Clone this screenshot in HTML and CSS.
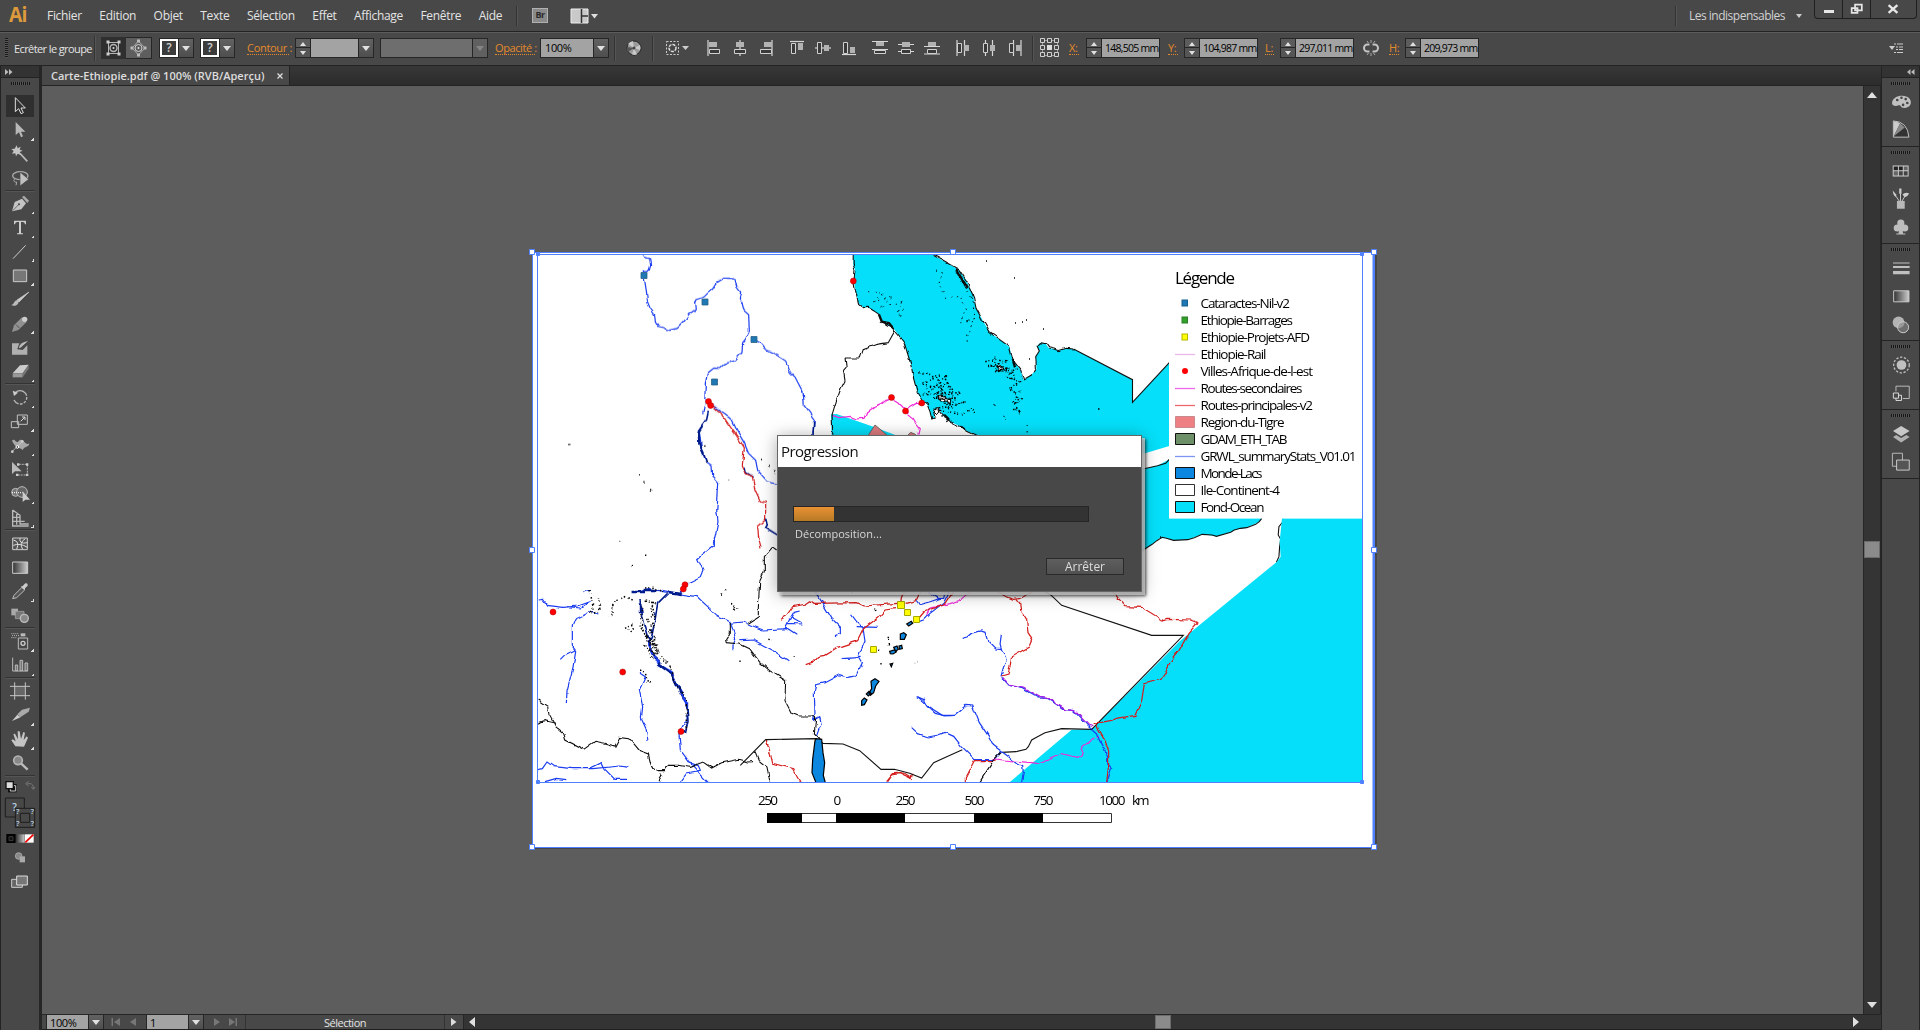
FILE: index.html
```html
<!DOCTYPE html>
<html lang="fr">
<head>
<meta charset="utf-8">
<title>Carte-Ethiopie.pdf @ 100% (RVB/Aperçu)</title>
<link rel="stylesheet" href="styles.css">
</head>
<body>
<svg class="defs" width="0" height="0" aria-hidden="true">
  <defs>
    <linearGradient id="lg" x1="0" y1="0" x2="1" y2="0"><stop offset="0" stop-color="#333"/><stop offset="1" stop-color="#ccc"/></linearGradient>
    <filter id="rough" filterUnits="userSpaceOnUse" x="530" y="250" width="850" height="540">
      <feTurbulence type="fractalNoise" baseFrequency="0.14" numOctaves="1" seed="4"/>
      <feDisplacementMap in="SourceGraphic" scale="5" xChannelSelector="R" yChannelSelector="G"/>
    </filter>
    <clipPath id="frame"><rect x="538" y="254" width="824" height="528"/></clipPath>
  </defs>
</svg>
<div class="app">
  <header class="menubar">
    <div class="logo">Ai</div>
    <nav class="menus"><span>Fichier</span><span>Edition</span><span>Objet</span><span>Texte</span><span>Sélection</span><span>Effet</span><span>Affichage</span><span>Fenêtre</span><span>Aide</span></nav>
    <i class="vsep"></i>
    <span class="bridge">Br</span>
    <svg class="arrange" width="28" height="18" viewBox="0 0 28 18"><path d="M1 2h17v14H1z" fill="#c9c9c9" stroke="#eee"/><path d="M11.500 2v14M11.500 9H18" stroke="#333" fill="none" stroke-width="1.500"/><path d="M21 7h7l-3.500 4.500z" fill="#ddd"/></svg>
    <div class="spacer"></div>
    <i class="vsep"></i>
    <span class="workspace">Les indispensables</span>
    <svg class="wsarrow" width="6" height="4" viewBox="0 0 6 4"><path d="M0 0h6L3 4z" fill="#ccc"/></svg>
    <div class="winbtns">
      <svg width="27" height="18" viewBox="0 0 27 18"><path d="M9 10h10v3H9z" fill="#e6e6e6"/></svg>
      <svg width="28" height="18" viewBox="0 0 28 18"><path d="M12.500 4.500h7v6h-7z M9 8h6v5H9z" fill="#484848" stroke="#e6e6e6" stroke-width="1.800"/></svg>
      <svg width="46" height="18" viewBox="0 0 46 18"><path d="M18 5l9 8M27 5l-9 8" stroke="#e6e6e6" stroke-width="2.400"/></svg>
    </div>
  </header>

  <div class="control">
    <i class="grip-v"></i>
    <span class="ctx">Ecrêter le groupe</span>
    <i class="vsep"></i>
    <div class="pair">
      <svg class="on" width="25" height="22" viewBox="0 0 25 22"><g fill="none" stroke="#b4b4b4"><path d="M7.500 5.500h10v11h-10z"/><circle cx="12.500" cy="11" r="3.500" stroke-width="1.500"/></g><path d="M5.500 3.500h3v3h-3zM16.500 3.500h3v3h-3zM5.500 15.500h3v3h-3zM16.500 15.500h3v3h-3z" fill="#ccc"/><circle cx="12.500" cy="11" r="1" fill="#ddd"/></svg>
      <svg width="25" height="22" viewBox="0 0 25 22"><path d="M12.500 4L19 11l-6.500 7L6 11z" fill="none" stroke="#aaa"/><circle cx="12.500" cy="11" r="3.500" fill="none" stroke="#ccc"/><path d="M11 2.500h3v3h-3zM11 16.500h3v3h-3zM4.500 9.500h3v3h-3zM17.500 9.500h3v3h-3z" fill="#bbb"/><circle cx="12.500" cy="11" r="1" fill="#ddd"/></svg>
    </div>
    <div class="swatch"><b>?</b><i class="dd"></i></div>
    <div class="swatch"><b>?</b><i class="dd"></i></div>
    <span class="link l-contour">Contour :</span>
    <div class="field w-stroke"><i class="step"></i><span class="inp"></span><i class="dd"></i></div>
    <div class="field disabled"><span class="inp"></span><i class="dd"></i></div>
    <span class="link l-opac">Opacité :</span>
    <div class="field w-opac"><span class="inp">100%</span><i class="dd"></i></div>
    <i class="vsep s1"></i>
    <svg class="globe" width="16" height="16" viewBox="0 0 16 16"><circle cx="8" cy="8" r="7" fill="#9a9a9a" stroke="#222"/><path d="M8 8L2 4a7 7 0 0 1 5-3zM8 8l6-3a7 7 0 0 1 0 5zM8 8l-2 6.500a7 7 0 0 0 5 0z" fill="#c8c8c8"/><path d="M8 8l-6 4a7 7 0 0 1-1-5z" fill="#555"/><circle cx="8" cy="8" r="1.500" fill="#444"/></svg>
    <i class="vsep s2"></i>
    <svg class="iso" width="25" height="16" viewBox="0 0 25 16"><path d="M1.500 1.500h12v13h-12z" fill="none" stroke="#ccc" stroke-dasharray="2 1.500"/><circle cx="7.500" cy="8" r="3.500" fill="none" stroke="#ddd" stroke-width="1.500" stroke-dasharray="3 1"/><path d="M17 6h7l-3.500 4z" fill="#ccc"/></svg>
    <div class="aligns">
      <svg viewBox="0 0 16 16"><path d="M2 0v16" class="ln"/><path d="M3 2h8v5H3z" class="fl"/><path d="M3.500 9.500h10v4h-10z" class="ol"/></svg>
      <svg viewBox="0 0 16 16"><path d="M8 0v16" class="ln"/><path d="M4 2h8v5H4z" class="fl"/><path d="M2.500 9.500h11v4h-11z" class="ol"/></svg>
      <svg viewBox="0 0 16 16"><path d="M14 0v16" class="ln"/><path d="M6 2h8v5H6z" class="fl"/><path d="M2.500 9.500h11v4h-11z" class="ol"/></svg>
      <svg viewBox="0 0 16 16"><path d="M1 1.500h14" class="ln"/><path d="M2.500 3.500h4v10h-4z" class="ol"/><path d="M9 3h5v7H9z" class="fl"/></svg>
      <svg viewBox="0 0 16 16"><path d="M0 8h16" class="ln"/><path d="M2.500 2.500h4v11h-4z" class="ol"/><path d="M9 5h5v6H9z" class="fl"/></svg>
      <svg viewBox="0 0 16 16"><path d="M1 14.500h14" class="ln"/><path d="M2.500 2.500h4v11h-4z" class="ol"/><path d="M9 7h5v6H9z" class="fl"/></svg>
      <svg viewBox="0 0 16 16"><path d="M0 1.500h16M0 9.500h16" class="ln"/><path d="M4 2h8v4H4z" class="fl"/><path d="M2.500 10.500h11v3h-11z" class="ol"/></svg>
      <svg viewBox="0 0 16 16"><path d="M0 4.500h16M0 11.500h16" class="ln"/><path d="M4 2h8v5H4z" class="fl"/><path d="M3.500 9.500h9v4h-9z" class="ol"/></svg>
      <svg viewBox="0 0 16 16"><path d="M0 6.500h16M0 14h16" class="ln"/><path d="M4 2h8v4H4z" class="fl"/><path d="M3.500 9.500h9v4h-9z" class="ol"/></svg>
      <svg viewBox="0 0 16 16"><path d="M2 0v16M9.500 0v16" class="ln"/><path d="M2.500 3.500h4v9h-4z" class="ol"/><path d="M9 5h5v6H9z" class="fl"/></svg>
      <svg viewBox="0 0 16 16"><path d="M4.500 0v16M11.500 0v16" class="ln"/><path d="M2.500 3.500h4v9h-4z" class="ol"/><path d="M9 5h5v6H9z" class="fl"/></svg>
      <svg viewBox="0 0 16 16"><path d="M6.500 0v16M14 0v16" class="ln"/><path d="M2.500 3.500h4v9h-4z" class="ol"/><path d="M9 5h5v6H9z" class="fl"/></svg>
    </div>
    <i class="vsep s3"></i>
    <svg class="refpt" width="20" height="20" viewBox="0 0 20 20"><g fill="none" stroke="#d0d0d0"><path d="M2.500 2.500h15v15h-15z" stroke="#999"/><path fill="#484848" d="M.5.500h4v4h-4zM7.500.500h4v4h-4zM14.500.500h4v4h-4zM.5 7.500h4v4h-4zM14.500 7.500h4v4h-4zM.5 14.500h4v4h-4zM7.500 14.500h4v4h-4zM14.500 14.500h4v4h-4z"/></g><path d="M7 7h5v5H7z" fill="#ddd"/></svg>
    <span class="link c-x">X:</span>
    <div class="field num"><i class="step"></i><span class="inp">148,505 mm</span></div>
    <span class="link c-y">Y:</span>
    <div class="field num"><i class="step"></i><span class="inp">104,987 mm</span></div>
    <span class="link c-l">L:</span>
    <div class="field num"><i class="step"></i><span class="inp">297,011 mm</span></div>
    <svg class="chain" width="16" height="16" viewBox="0 0 16 16"><path d="M6.500 4.500H4.500a3.500 3.500 0 0 0 0 7h2M9.500 4.500h2a3.500 3.500 0 0 1 0 7h-2" fill="none" stroke="#c4c4c4" stroke-width="2"/><path d="M8 0v3M8 13v3M4 1l1.500 2M12 1l-1.500 2M4 15l1.500-2M12 15l-1.500-2" stroke="#aaa"/></svg>
    <span class="link c-h">H:</span>
    <div class="field num"><i class="step"></i><span class="inp">209,973 mm</span></div>
    <div class="spacer"></div>
    <svg class="flyout" width="14" height="10" viewBox="0 0 14 10"><path d="M0 3h6L3 7z" fill="#ccc"/><path d="M5 1h9M7 4h7M7 6.500h7M5 9.500h9" stroke="#ccc" stroke-dasharray="2 1 9"/></svg>
  </div>

  <div class="main">
    <aside class="tools">
      <div class="phead"><svg width="8" height="6" viewBox="0 0 8 6"><path d="M0 0l3.500 3L0 6zM4 0l3.500 3L4 6z" fill="#bbb"/></svg></div>
      <i class="grip-h"></i>
      <div class="toollist">
        <svg class="t sel" viewBox="0 84 120 72"><path d="M46 95v42l10-9 7 15 7-3-7-14h13z" fill="#333" stroke="#ddd" stroke-width="3"/></svg>
        <svg class="t sub" viewBox="0 156 120 72"><path d="M47 168v39l10-8 6 15 6-3-6-14h13z" fill="#b8b8b8"/></svg>
        <svg class="t" viewBox="0 228 120 72"><path d="M60 262l22 24" stroke="#b8b8b8" stroke-width="5"/><path d="M50 238l3 9 9-5-3 9 9 3-9 4 4 9-10-4-5 8-2-9-10 1 5-8-7-6 10-1z" fill="#c4c4c4"/></svg>
        <svg class="t" viewBox="0 300 120 72"><ellipse cx="61" cy="329" rx="23" ry="12" fill="none" stroke="#aaa" stroke-width="4"/><path d="M46 338c-8 4-4 12 4 10l-2 10" fill="none" stroke="#aaa" stroke-width="3"/><path d="M60 318v42l26-20z" fill="#c0c0c0" stroke="#484848" stroke-width="2"/></svg>
        <i class="hs first"></i>
        <svg class="t sub" viewBox="0 375 120 72"><path d="M36 436l8-28 22-10 12 14-14 18z" fill="#c4c4c4"/><path d="M66 393l6-4 15 15-5 7z" fill="#aaa"/><path d="M38 434l18-18" stroke="#444" stroke-width="2"/><circle cx="57" cy="415" r="3" fill="#444"/></svg>
        <svg class="t sub" viewBox="0 447 120 72"><path d="M42 464h36v11h-3q-1-7-7-7h-5v32q0 2 6 2v3H51v-3q6 0 6-2v-32h-5q-6 0-7 7h-3z" fill="#ccc"/></svg>
        <svg class="t sub" viewBox="0 519 120 72"><path d="M39 578l38-40" stroke="#ccc" stroke-width="3"/></svg>
        <svg class="t sub" viewBox="0 591 120 72"><path d="M40 612h40v35H40z" fill="#777" stroke="#ccc" stroke-width="3"/></svg>
        <svg class="t" viewBox="0 663 120 72"><path d="M87 678l-30 30-6-6z" fill="#ccc" stroke="#ccc" stroke-width="2"/><path d="M55 702c4 12-8 22-22 15 10 0 8-16 22-15z" fill="#bbb"/></svg>
        <svg class="t sub" viewBox="0 735 120 72"><path d="M36 798l6-20 24-24 14 14-25 24z" fill="#909090"/><circle cx="74" cy="760" r="8" fill="#ccc"/><path d="M48 776l10 10" stroke="#555" stroke-width="3"/></svg>
        <svg class="t" viewBox="0 807 120 72"><path d="M36 832h22l-6 18 16 2 14-14v28H36z" fill="#b0b0b0"/><path d="M88 823L62 846l-8 2 4-10c8-12 20-12 30-15z" fill="#bbb" stroke="#333" stroke-width="2"/></svg>
        <svg class="t sub" viewBox="0 879 120 72"><path d="M38 922l22-24 26-2-18 26z" fill="#ccc"/><path d="M38 922h30v12H38z" fill="#999"/><path d="M68 922l18-26v12l-18 26z" fill="#777"/></svg>
        <i class="hs"></i>
        <svg class="t sub" viewBox="0 957 120 72"><path d="M46 980a20 20 0 1 1-4 22" fill="none" stroke="#b8b8b8" stroke-width="4" stroke-dasharray="42 4 8 4 8 4 8 4"/><path d="M38 974l4 16 12-10z" fill="#ccc"/></svg>
        <svg class="t sub" viewBox="0 1029 120 72"><path d="M52 1047h30v28H52zM34 1067h22v18H34z" fill="none" stroke="#c0c0c0" stroke-width="3"/><path d="M62 1066l12-12M66 1053h9v9" fill="none" stroke="#ddd" stroke-width="3"/></svg>
        <svg class="t sub" viewBox="0 1101 120 72"><path d="M36 1124c8-10 12 10 20 2 10-16 20 16 32 6-2 14-14 8-20 20-8-10-20-2-32-28z" fill="#a8a8a8"/><path d="M36 1157l32-32" stroke="#ddd" stroke-width="2"/><circle cx="52" cy="1143" r="4" fill="#484848" stroke="#fff" stroke-width="3"/><circle cx="37" cy="1157" r="4" fill="#ccc"/><circle cx="67" cy="1126" r="4" fill="#ccc"/></svg>
        <svg class="t" viewBox="0 1173 120 72"><path d="M36 1188v36l9-8h20z" fill="#bbb"/><path d="M56 1195h26v32H50" fill="none" stroke="#bbb" stroke-width="3" stroke-dasharray="6 3"/><path d="M51 1192h7v7h-7zM78 1192h7v7h-7zM78 1223h7v7h-7zM48 1223h7v7h-7z" fill="#ccc"/></svg>
        <svg class="t sub" viewBox="0 3 120 72"><circle cx="47" cy="37" r="12" fill="#777" stroke="#bbb" stroke-width="3"/><circle cx="66" cy="36" r="16" fill="#666" stroke="#bbb" stroke-width="3"/><path d="M36 38h32" stroke="#fff" stroke-width="3" stroke-dasharray="3 3"/><path d="M68 34v32l8-7h14z" fill="#ccc"/></svg>
        <svg class="t sub" viewBox="0 75 120 72"><path d="M38 90v48h48M38 90l22 16v26h26M50 98v36M38 112h22M38 124h36" fill="none" stroke="#b8b8b8" stroke-width="4"/></svg>
        <i class="hs"></i>
        <svg class="t" viewBox="0 153 120 72"><path d="M38 174h44v35H38z" fill="#555" stroke="#ccc" stroke-width="3"/><path d="M40 180q20 4 10 28M40 196q20-8 42 6M60 174q-4 20 22 14M76 176q-20 12-8 32" fill="none" stroke="#ddd" stroke-width="3"/></svg>
        <svg class="t" viewBox="0 225 120 72"><path d="M38 246h45v34H38z" fill="url(#lg)" stroke="#ccc" stroke-width="3"/></svg>
        <svg class="t sub" viewBox="0 297 120 72"><path d="M38 356l4-10 24-24 8 8-24 23z" fill="#555" stroke="#bbb" stroke-width="3"/><path d="M62 320l6-2 8-8q8-2 7 7l-8 8v6z" fill="#ccc"/></svg>
        <svg class="t" viewBox="0 369 120 72"><path d="M34 386h20v20H34z" fill="#aaa"/><path d="M46 394h26v22H46z" fill="#777" stroke="#aaa" stroke-width="2"/><circle cx="73" cy="415" r="12" fill="#888" stroke="#bbb" stroke-width="4"/></svg>
        <i class="hs"></i>
        <svg class="t sub" viewBox="0 450 120 72"><path d="M55 477h28v33H55z" fill="none" stroke="#bbb" stroke-width="3"/><path d="M62 463h14v9H62z" fill="#bbb"/><circle cx="69" cy="493" r="6" fill="none" stroke="#ccc" stroke-width="4"/><path d="M34 464h24M36 470h24M34 476h16" stroke="#bbb" stroke-width="3" stroke-dasharray="3 3"/></svg>
        <svg class="t sub" viewBox="0 522 120 72"><path d="M38 536v40h46" fill="none" stroke="#bbb" stroke-width="3"/><path d="M46 558h7v17h-7zM60 544h8v31h-8zM75 552h8v23h-8z" fill="#777" stroke="#bbb" stroke-width="3"/></svg>
        <i class="hs"></i>
        <svg class="t" viewBox="0 600 120 72"><path d="M44 622h32v30H44z" fill="#666"/><path d="M44 610v12M76 610v12M44 652v10M76 652v10M30 622h60M30 650h60M44 622v30M76 622v30" stroke="#c4c4c4" stroke-width="3"/></svg>
        <svg class="t sub" viewBox="0 672 120 72"><path d="M90 686l-24 6-14 14 10 8 24-16z" fill="#aaa"/><path d="M36 726l16-19 10 8z" fill="#ccc"/></svg>
        <svg class="t sub" viewBox="0 744 120 72"><path d="M46 802l-12-18 4-3 9 6-7-22 5-1 9 17-1-24h6l4 23 7-21 5 2-4 22 9-11 4 4-12 27z" fill="#c4c4c4"/></svg>
        <svg class="t" viewBox="0 816 120 72"><circle cx="54" cy="844" r="13" fill="#888" stroke="#b4b4b4" stroke-width="5"/><path d="M63 853l20 19" stroke="#bbb" stroke-width="7"/></svg>
        <i class="hs"></i>
        <svg class="colors" width="40" height="120" viewBox="0 892 120 360">
          <path d="M24 913h26v25H24z" fill="#111"/><path d="M31 918h16v16H31z" fill="#111" stroke="#ccc" stroke-width="3"/><path d="M18 906h22v21H18z" fill="#ddd" stroke="#111" stroke-width="4"/>
          <path d="M82 912h8q10 0 10 14M86 905l-9 7 9 7M94 922l6 7 5-7" fill="none" stroke="#777" stroke-width="3"/>
          <path d="M16 955h57v57H16z" fill="#484848" stroke="#1d1d1d" stroke-width="3"/><path d="M46 986h58v57H46z" fill="#484848" stroke="#1d1d1d" stroke-width="3"/><path d="M61 1001h28v27H61z" fill="#484848" stroke="#1d1d1d" stroke-width="3"/>
          <g class="qm"><text x="37" y="994" font-size="30">?</text><text x="49" y="1004" font-size="21">?</text><text x="92" y="1004" font-size="21">?</text><text x="49" y="1040" font-size="21">?</text><text x="92" y="1040" font-size="21">?</text></g>
          <path d="M19 1063h28v27H19z" fill="#000"/><path d="M27 1071h12v12H27z" fill="#111" stroke="#555" stroke-width="2"/><path d="M48 1064h26v25H48z" fill="url(#lg)"/><path d="M75 1064h26v25H75z" fill="#fff"/><path d="M76 1088l24-23" stroke="#e00" stroke-width="5"/>
          <circle cx="56" cy="1129" r="10" fill="#888" stroke="#bbb" stroke-width="2"/><path d="M59 1130h16v18H59z" fill="#aaa"/>
          <path d="M35 1199h32v24H35z" fill="#666" stroke="#ccc" stroke-width="3"/><path d="M50 1189h32v27H50z" fill="#777" stroke="#ddd" stroke-width="3"/>
        </svg>
      </div>
    </aside>

    <section class="doc">
      <div class="tabs"><div class="tab"><span>Carte-Ethiopie.pdf @ 100% (RVB/Aperçu)</span><svg width="6" height="6" viewBox="0 0 6 6"><path d="M.5.500l5 5M5.500.500l-5 5" stroke="#ddd" stroke-width="1.300"/></svg></div></div>
      <div class="view">
        <div class="canvas">
          <svg class="map" width="1821" height="928" viewBox="42 86 1821 928">
            <path d="M534 848h842V255" fill="none" stroke="#333" stroke-width="2" opacity=".5"/>
            <rect x="532" y="252" width="842" height="595" fill="#fff"/>
            <g clip-path="url(#frame)">
              <g transform="translate(820 245) scale(.35714 .33333)">
                <path class="sea" d="M93 20V60L98 75 95 110 102 150 108 175 122 188 135 187 150 197 165 208 172 228 185 238 205 250 220 270 235 290 245 325 255 360 262 400 272 440 285 465 300 478 308 500 313 522 322 518 318 500 330 490 345 510 365 530 395 545 405 555 440 572 500 700 901 628 978 603V353L875 472V404L710 312 690 310 668 317 655 312 640 308 632 296 617 293 608 303 614 318 604 335 606 372 592 390 570 404 562 375 540 345 530 305 475 262 455 225 437 190 430 155 412 110 390 75 350 50 300 20z"/>
                <path class="sea" d="M880 680L901 673 945 662 978 643V820H1237L1230 830 1195 848 1160 855 1150 862 1110 874 1070 868 1030 884 990 886 970 880 950 880 930 898 901 918 880 930z"/>
                <path class="coast" d="M978 353L875 472V404L710 312"/>
                <path class="coast" d="M901 673L945 662 968 655 978 643M1237 820l-7 10-10 8-25 10-18 2-17 5-10 7-40 12-12-4-28-2-22 10-18 6-40 2-20-6-12-3-15 10-13 11-29 20M1297 820l-2 12-10 13-2 25 7 13-3 22-2 30-7 17"/>
              </g>
              <g transform="translate(860 540) scale(.33333)">
                <path class="sea" d="M1250 66L960 303 695 568 635 569 445 730H1510V-65H1266L1259 5 1262 50z"/>
                <path class="coast" d="M550 152l24 14 31 30 270 90h95L695 568l-90-2-50 12-28 15-12 7-10 20-7 8-30 7-43 2"/>
              </g>
              <g transform="translate(525 245) scale(.33333)">
                <path class="sea" d="M918 508l17-1 110 38 80 30H920z"/>
                <path d="M1028 574l22-34 18 15 22 19zM1145 574l12-12 12 5 8 7z" fill="#dd7c80" stroke="#555" stroke-width=".8"/>
              </g>
              <g filter="url(#rough)">
                <g transform="translate(820 245) scale(.35714 .33333)">
                  <path class="coast" d="M93 20V60L98 75 95 110 102 150 108 175 122 188 135 187 150 197 165 208 172 228 185 238 205 250 220 270 235 290 245 325 255 360 262 400 272 440 285 465 300 478 308 500 313 522 322 518 318 500 330 490 345 510 365 530 395 545 405 555 440 572M710 312L690 310 668 317 655 312 640 308 632 296 617 293 608 303 614 318 604 335 606 372 592 390 570 404 562 375 540 345 530 305 475 262 455 225 437 190 430 155 412 110 390 75 350 50 300 20"/>
                  <path class="coast" d="M33 512l12-42 13-38 12-25-4-28 10-12-3-28 40 0 8-25 40-16 30-5 20-38M31 508l2 64"/>
                  <path class="coast fat" d="M165 208l8 22 20 4 14 18M345 510l16 16M395 545l14 12M380 70l32 60M540 345l6 22"/>
                  <path d="M332 452l8-2 12 12 14 2-2 12-14-8-12 4zM322 490l10-2 4 12-8 10-8-8zM495 362l10 0 6 12-8 4z" fill="#fff" stroke="#000"/>
                  <path class="pink" d="M33 512l20 6 30-4 20 8 20-2 8-20 18-14 24-10 12-10 14-6 22 14 16 18 8 14 16 14 10 18 10 14-4 20M240 500l10-12 18-12 18-2"/>
                  <path class="speck" d="M275 380l40 15 20-5-50 30 60 10 10-40-60 60 80-10-20-30 20 50-60 0 80-20-40 50 50-20-80 20 70 20 30-20 10 20M325 420l20 15-20 10 26 10-10 10 28-4M460 350l30-10 30 10-50 15 60 5-40 10 60-5-30 20 30 10-10-20-30-20M530 400l30 10-30 20 25 20-10 30 20-20M540 470l15 30-15-10"/>
                  <path class="speck" d="M480 345l20 10-18 10 26 2-18 12 26-4M330 440l16 10-14 12 24 4-10 10 22-2M330 400l12 30 8 10-20 20M340 515l12 4 4 12M488 480h4M512 515l6 10"/>
                  <path class="speck lt" d="M135 140l45 5-30 25 55-15-35 30 60-15-10 30 20-10-25 25 20-5M325 75l20 10-15 30 20 30-15-10M350 160l40-10 20 40-20 40 40 0-20 40 5 20M380 80l30 50 15 30 10 60-30 10M300 430l-15 25M400 470l-30 20M560 440l-10 60M580 540v40"/>
                </g>
                <g transform="translate(525 245) scale(.33333)">
                  <path class="river" d="M352 25l8 12 14 4 3 20-4 14-18 2 2 17 8 50 2 25 8 20 14 20 2 22 8 14 18 3 16 8 24-6 20-20 14-22 20-14-2-20 4-10 24-8 14-14 12-10 10-16 24-16 20 0 12 3 6 22 12 16-4 20 8 12 6 24 14 12 2 50-12 24-8 10-2 30-20 22-30 12-14 14-20-2-20 16-6 32-2 60-6 28M688 284l16 8 14 18 40 22 24 16 14 34 14 14 24 46 4 40 30 42-4 44M560 480l40 26 18 14 20 40 20 34 12 30 22 22 6 30 30 34 40 10M523 560l6 44 12 44 20 14 2 30 18 20-2 40-4 44 4 34-8 40-6 26"/>
                  <path class="river dk" d="M550 500l-5 24-10 14-14 20 2 40 14 30 6 20M660 665l4 18 22 14M866 530l-2 44M722 820l6 18-6 10 36 22"/>
                  <path class="river dk fat" d="M535 540l-14 22 2 34 14 30M724 822l4 16"/>
                  <path class="road" d="M560 480l28 24 20 30 28 40 22 34-6 52 12 26 18 8 8 40 16 34 16 4v52l-24 22 2 24 8 40"/>
                  <path class="speck" d="M133 598h3M342 688l6 2M352 714h4M375 736l8 6M610 706h3M283 888h3M708 640h3M730 660l4 4M746 676l4 20M538 598l4 4M542 650h4"/>
                </g>
                <g transform="translate(525 540) scale(.33333)">
                  <path class="river" d="M38 180l14-2 14 18 50 6 40-4 40-14-30 20-40-4M172 155l14-6 12 4M220 222l-20-8-50 24-8 20 0 60 10 14-8 50-18 70-2 40M150 330l-30 14-14 14M568 0v16l-50 40 16 34-8 20-40 20-20 30M320 156l30-2 20-8 60 12 36 4 50 8 60 56 40 20 16 50-8 20 0 12M614 250l40-4 60 24 70-4 30 20M780 266l14-28 14-24 16-4M788 250l44 2M800 232l30 16M646 302l40-2 60 32 44 30M345 400l16 10-18 40 10 50-4 36 14 30 6 34M38 690l14-4 14-20 20 14 60 6 60 0 80-8 24 4M190 688l40-20 10 20 30 30 36 0M60 725l34-10 30 4M488 490l-2 50-24 40 4 50 30 40 56 60M466 725l20-26 40-8-6-14-30-10M870 155l20 30 30 50 26 26v20l-16 6M978 222l18 24 18 18 6 40-20 44 12 20-20 40-24 4-24-8-46 24-26 6-4 26 2 60-4 20 18-10 4 20-14 40M950 356l60-4M995 260l60 2M1178 470l30 28 44 28 38 0"/>
                  <path class="river dk" d="M345 180l6 40 10 40 20 70 24 44 40 30 20 50 20 40 4 50-8 34M428 160l-30 30-8 50-10 50-10 20"/>
                  <path class="river fat" d="M368 300l16 40 20 36 36 20 16 40 20 34 10 30"/>
                  <path class="river dk fat" d="M400 372l40 30 14 30 14 30M320 156h40M430 156l40 6M356 150l40 0M345 190v30"/>
                  <path class="road" d="M765 238l20-12 18-26 40-8 14-10 10 8 130-2 20 10 100-8M1110 206l-30 4-20 22-44 34-18 36-60 20-40 24-20 4-14 16-22 8M723 600l8 20 12 50 60 16 22 40M1088 725l14-20 24-4 30 14 2-16"/>
                  <path class="coast" d="M758 30l-14-10-26 30v44l-14 30-4 80v26l-30 20M616 246v34l-14 22 2 6 40 4 30 14 30 40 30 26 48 30-2 60 20 38 20 8 40 0 12 4-4 50 18 18M38 480l30 20 4 24 20 36 24 20 6 20 54 28 34-24 30 6 30 8 14-26 30 4 30 36 26 10 10 40 20 10 20 0 10-16 30 0 34 6 40-16 26 18 30-16 50-10 28 8 16-1M38 550l20-8 34 8M404 700l6 10-8 14M690 634l12 30 24 20 8 40"/>
                  <path class="speck" d="M320 180l-20-10-20 10-20 20 5 20-15 10M195 150l10 60-10 10 30-10-5-40M300 265l20-10 2 20-20-6M350 200l-5 60 20 30 20 50M420 360l14 16 8 20 12 40 30 40 0 60 0 30M385 300l14 40-10-30M345 390l16 8 6 30 8 0M590 160l-4 8M600 146v6M618 190l16 16-14 10 10-16M730 298l10 2M1050 210l8 4M1090 290v30M1060 330l6 4M1066 374h4M320 76h4M360 46h4M640 364h4M806 350h3"/>
                  <path class="speck" d="M360 144l24-2 20 10 14 6M362 180l30 10-20 20 20 10-25 20 20 20-20 30 20 20-10 20 20 10M380 185l10 50-15 30 15 30-25 10 30 10-25 14 26 10-20 14 24 6M355 230l-4 40 14 24-6 20 14 20 4 20M410 350l14 20-20-10M1170 372l18-8M985 152v8"/>
                </g>
                <g transform="translate(860 540) scale(.33333)">
                  <path class="river" d="M305 295l16-4 12-10 30-8 12 4 8 26 24 24 18 2 14 28-10 30-6 22M424 284l-4 30 4 14M170 470l20 8 10 20 26 22 30 8 26-2 36-30 20 2 20 50 30 44 12 24 40 30 34 26 14 8 2 20-6 30M155 563l20 18 30 10 30-6 20-8 26 12 24 30 34 34 4 6h62l20-24M168 180l10 14 30-8 30-10M270 150l-20 40-40 30-20 20-22 8M205 155l30 20 16 0 6-26M697 568l12 10 10 24 14 24 10 26 0 20 12 12-14 42"/>
                  <path class="river" d="M425 412l22 24 40 10 50 28 28 2 46 32 30 4 44 48 10 8"/>
                  <path class="pink purple" d="M428 412l22 24 40 8 50 28 28 4 46 32 30 4 42 44 14 4"/>
                  <path class="pink" d="M716 588l-14 8-32 22-6 26-10 8-20-4-30-8-20 8-50 22-60-6-44-4-30-4M330 155l-30 26-30 10-60 14-10 20"/>
                  <path class="road" d="M120 210l4-40 8-18M140 190l34-10 8-26M172 240l20-24 60-22 26-40M410 152l20 14 30 12 18-2 40-20M470 178l12 14 4 24 14 22 4 40 14 20-10 24-54 30-4 30-6 20-20 6M755 152l42 48 48 2 66 40 10-4 70 2 22 8-26 30-30 54-24 30-20 40-10 16-50 14-8 50-20 44-40 6-60 16-24 6M708 550l8 20 20 34 10 30 0 40-6 52M344 662h60l6-2M344 660l-28 54v12M80 725l20-24 30-2 24 16 4-16"/>
                  <path class="coast" d="M424 637l-22 22-42 66"/>
                </g>
              </g>
              <path class="coast" transform="translate(525 540) scale(.33333)" d="M646 676l76-77 150-3 22 14 60 2 50 20 64 56 40 0 46 12 36 14 36-46 86-39"/>
              <g transform="translate(525 540) scale(.33333)">
                <path class="lake" d="M870 602l4-6 16 2 4 40 5 30-4 38 6 22h-28l-12-30 2-40zM1145 252l14-8 4 6-12 8zM1126 282l10-4 8 6-6 14-12 0zM1106 322l10-4 4 10-8 6zM1122 318l8-2 2 10-8 2zM1094 334l14-4 6 6-10 6-8-1zM1095 372l8-2-4 10zM1038 424l12-8 12 8-10 14-6 20-10 8-4-6 8-14zM1024 462l8-8 6 6-8 8zM1010 482l8-8 8 6-8 14-8 2z"/>
              </g>
            </g>
            <g class="cata"><path d="M641 272.500h6v6h-6zM702 299h6v6h-6zM751 336.500h6v6h-6zM711.500 379h6v6h-6z"/></g>
            <g class="proj"><path d="M897.500 601.500h7v7h-7zM904.500 609.500h6v6h-6zM913.500 616.500h6v6h-6zM870.500 646.500h6v6h-6z"/></g>
            <g class="ville"><circle cx="853.300" cy="281" r="3"/><circle cx="708.500" cy="401.500" r="3"/><circle cx="710.600" cy="405.500" r="3"/><circle cx="891.500" cy="397.500" r="3"/><circle cx="905.500" cy="411" r="3"/><circle cx="921.800" cy="403" r="3"/><circle cx="685" cy="584.800" r="3"/><circle cx="683.300" cy="589" r="3"/><circle cx="553" cy="612" r="3"/><circle cx="622.700" cy="672" r="3"/><circle cx="681" cy="731.500" r="3"/></g>
            <path class="speck" d="M986 261h1M1014 278h1M1015 323h1M1022 322h1M1026 320h1M1043 329h1M1029 359h1M1098 409h2M1160 537h1"/>

            <rect x="1169" y="270" width="193" height="248.500" fill="#fff"/>
            <g class="legend">
              <text x="1175" y="283.500" font-size="17" textLength="60">Légende</text>
              <g font-size="13.500">
                <text x="1200.500" y="307.500" textLength="89.500">Cataractes-Nil-v2</text>
                <text x="1200.500" y="324.500" textLength="92.500">Ethiopie-Barrages</text>
                <text x="1200.500" y="341.500" textLength="109.500">Ethiopie-Projets-AFD</text>
                <text x="1200.500" y="358.500" textLength="66">Ethiopie-Rail</text>
                <text x="1200.500" y="375.500" textLength="112.500">Villes-Afrique-de-l-est</text>
                <text x="1200.500" y="392.500" textLength="102">Routes-secondaires</text>
                <text x="1200.500" y="409.500" textLength="112.500">Routes-principales-v2</text>
                <text x="1200.500" y="426.500" textLength="84">Region-du-Tigre</text>
                <text x="1200.500" y="443.500" textLength="87">GDAM_ETH_TAB</text>
                <text x="1200.500" y="460.500" textLength="156">GRWL_summaryStats_V01.01</text>
                <text x="1200.500" y="477.500" textLength="62">Monde-Lacs</text>
                <text x="1200.500" y="494.500" textLength="79.500">Ile-Continent-4</text>
                <text x="1200.500" y="511.500" textLength="64">Fond-Ocean</text>
              </g>
              <rect x="1182" y="300" width="5.500" height="6" fill="#1f78b4" stroke="#17608f"/>
              <rect x="1182" y="317" width="5.500" height="6" fill="#33a02c" stroke="#2a7d24"/>
              <rect x="1182" y="334" width="5.500" height="6" fill="#ff0" stroke="#b5b500"/>
              <path d="M1175 354.500h20" stroke="#eab8ea" stroke-width="1.300"/>
              <circle cx="1185" cy="371" r="3" fill="#f00"/>
              <path d="M1175 388.500h20" stroke="#f066e8" stroke-width="1.300"/>
              <path d="M1175 405.500h20" stroke="#ee6a6a" stroke-width="1.300"/>
              <path d="M1175.500 416.500h19v11h-19z" fill="#ee8083" stroke="#c98a8c"/>
              <path d="M1175.500 433.500h19v11h-19z" fill="#6c8f67" stroke="#111"/>
              <path d="M1175 456.500h20" stroke="#7f95f2" stroke-width="1.300"/>
              <path d="M1175.500 467.500h19v11h-19z" fill="#0c87df" stroke="#111"/>
              <path d="M1175.500 484.500h19v11h-19z" fill="#fff" stroke="#333"/>
              <path d="M1175.500 501.500h19v11h-19z" fill="#05dff9" stroke="#111"/>
            </g>
            <g class="legend scale" font-size="13.500">
              <text x="758" y="804.500" textLength="20">250</text><text x="833.500" y="804.500">0</text><text x="895.500" y="804.500" textLength="20">250</text><text x="964.500" y="804.500" textLength="20">500</text><text x="1033.500" y="804.500" textLength="20">750</text><text x="1099" y="804.500" textLength="26.500">1000</text><text x="1132" y="804.500" textLength="17.500">km</text>
              <path d="M767.500 813.500h344v9h-344z" fill="#fff" stroke="#333"/>
              <path d="M767 813h35v10h-35zM836 813h69v10h-69zM974 813h69v10h-69z"/>
            </g>
            <g fill="none" stroke="#4f80ff">
              <path d="M537.500 254.500h825v528h-825zM532.500 252.500h842v595h-842z"/><path d="M1373.500 252v595" stroke-width="2"/>
              <path fill="#4f80ff" d="M536.500 252.500h3v3h-3zM1360.500 252.500h3v3h-3zM536.500 780.500h3v3h-3zM1360.500 780.500h3v3h-3z"/>
              <path fill="#fff" d="M529.500 249.500h5v5h-5zM950.500 249.500h5v5h-5zM1371.500 249.500h5v5h-5zM529.500 547.500h5v5h-5zM1371.500 547.500h5v5h-5zM529.500 844.500h5v5h-5zM950.500 844.500h5v5h-5zM1371.500 844.500h5v5h-5z"/>
            </g>
          </svg>
        </div>
        <div class="vscroll"><i class="up"></i><i class="vthumb"></i><i class="down"></i></div>
      </div>
      <footer class="status">
        <div class="sfield"><span>100%</span><i class="dd"></i></div>
        <svg class="nav1" width="42" height="8" viewBox="0 0 42 8"><path d="M7.500 0H9v8H7.500zM16 0v8l-6-4zM32 0v8l-6-4z" fill="#777"/></svg>
        <div class="sfield"><span>1</span><i class="dd"></i></div>
        <svg class="nav2" width="41" height="8" viewBox="0 0 41 8"><path d="M10 0v8l6-4zM25 0v8l6-4zM31.500 0H33v8h-1.500z" fill="#777"/></svg>
        <div class="info">Sélection</div>
        <div class="more"><svg width="6" height="8" viewBox="0 0 6 8"><path d="M0 0v8l5.500-4z" fill="#ddd"/></svg></div>
        <div class="hscroll"><i class="left"></i><i class="hthumb"></i><i class="right"></i></div>
      </footer>
    </section>

    <aside class="panels">
      <div class="phead r"><svg width="8" height="6" viewBox="0 0 8 6"><path d="M3.500 0L0 3l3.500 3zM7.500 0L4 3l3.500 3z" fill="#bbb"/></svg></div>
      <div class="pgroup"><i class="grip-h"></i>
        <svg viewBox="125 86 114 84"><path d="M156 132c0-24 40-30 54-14 10 14 0 30-20 28-8-2-6-10-14-8-8 4-20 2-20-6z" fill="#c0c0c0"/><g fill="#444"><circle cx="172" cy="122" r="4"/><circle cx="185" cy="115" r="4"/><circle cx="198" cy="119" r="4"/><circle cx="203" cy="131" r="4"/><circle cx="190" cy="137" r="4"/></g></svg>
        <svg viewBox="125 170 114 84"><path d="M160 234v-50q44 2 48 50z" fill="#333" stroke="#c4c4c4" stroke-width="3"/><path d="M161 232v-46q12 0 20 5z" fill="#ccc"/><path d="M161 232l20-41 14 13z" fill="#888"/></svg></div>
      <div class="pgroup"><i class="grip-h"></i>
        <svg viewBox="125 289 114 84"><path d="M158 314h49v34h-49z" fill="#ccc"/><path d="M161 317h13v12h-13zM177 317h12v12h-12z" fill="#222"/><path d="M192 317h12v12h-12zM161 332h13v13h-13z" fill="#666"/><path d="M177 332h12v13h-12zM192 332h12v13h-12z" fill="#444"/></svg>
        <svg viewBox="125 372 114 84"><path d="M171 420h24v24h-24z" fill="#b8b8b8"/><path d="M178 420l-14-20M182 420v-34M187 420l12-20" stroke="#ccc" stroke-width="3"/><path d="M158 388l12 14-4 6q-8-8-8-20zM178 382h7v16h-7zM188 400q8-8 20-4-2 10-14 12z" fill="#ccc"/></svg>
        <svg viewBox="125 456 114 84"><g fill="#bdbdbd"><circle cx="183" cy="486" r="11"/><circle cx="172" cy="501" r="11"/><circle cx="195" cy="501" r="11"/><path d="M180 494h7l3 24h7v3h-28v-3h7z"/></g></svg></div>
      <div class="pgroup"><i class="grip-h"></i>
        <svg viewBox="125 578 114 84"><path d="M159 603h51v3h-51zM159 614h51v6h-51zM159 629h51v10h-51z" fill="#c0c0c0"/></svg>
        <svg viewBox="125 662 114 84"><path d="M161 688h47v34h-47z" fill="url(#lg)" stroke="#ccc" stroke-width="3"/></svg>
        <svg viewBox="125 746 114 84"><circle cx="176" cy="783" r="18" fill="#b4b4b4"/><circle cx="190" cy="798" r="17" fill="#888" fill-opacity=".6" stroke="#ccc" stroke-width="3"/></svg></div>
      <div class="pgroup"><i class="grip-h"></i>
        <svg viewBox="125 871 114 84"><circle cx="185" cy="913" r="15" fill="#c0c0c0"/><circle cx="185" cy="913" r="24" fill="none" stroke="#c0c0c0" stroke-width="4" stroke-dasharray="7 5"/></svg>
        <svg viewBox="125 955 114 84"><path d="M168 992v-16h41v38h-20" fill="none" stroke="#bbb" stroke-width="3"/><path d="M160 997h16v16h-16zM176 1004h9v16h-17v-7" fill="#484848" stroke="#ddd" stroke-width="3"/></svg></div>
      <div class="pgroup"><i class="grip-h"></i>
        <svg viewBox="125 1077 114 84"><path d="M159 1110l25-16 26 16-26 16z" fill="#c8c8c8"/><path d="M159 1128l10-6 15 9 16-9 10 6-26 17z" fill="#b0b0b0"/></svg>
        <svg viewBox="125 1161 114 84"><path d="M157 1176h31v40h-31z" fill="none" stroke="#bbb" stroke-width="3"/><path d="M170 1197h39v31h-39z" fill="#555" stroke="#ccc" stroke-width="3"/></svg></div>
    </aside>
  </div>

  <div class="dialog">
    <div class="dtitle">Progression</div>
    <div class="dbody">
      <div class="bar"><div class="fill" style="width:40px"></div></div>
      <div class="dmsg">Décomposition...</div>
      <div class="drow"><button class="stop">Arrêter</button></div>
    </div>
  </div>
</div>
</body>
</html>
```

FILE: styles.css
```css
* { box-sizing: border-box; }
body { margin: 0; background: #484848; overflow: hidden; font-family: "Open Sans", "Noto Sans", sans-serif; color: #e4e4e4; }
.defs { position: absolute; }
svg { display: block; flex: none; }
i { display: block; flex: none; font-style: normal; }
.app { width: 1920px; height: 1030px; display: flex; flex-direction: column; position: relative; }
.spacer { flex: 1; }
.vsep { width: 2px; background: #333; border-right: 1px solid #555; height: 20px; }

/* menu bar */
.menubar { height: 32px; flex: none; display: flex; align-items: center; padding-left: 9px; border-bottom: 1px solid #232323; }
.logo { width: 38px; font: 700 22px/28px "Open Sans", sans-serif; color: #dd9a3c; letter-spacing: -1px; margin-top: -5px; transform-origin: 0 50%; transform: scaleX(.88); }
.menus { display: flex; gap: 17.5px; font-size: 12px; letter-spacing: -.31px; width: 469px; white-space: nowrap; }
.bridge { width: 16px; height: 15px; margin-left: 14px; background: #8a8a8a; border: 1px solid #b0b0b0; color: #2a2a2a; font: 700 9px/12px "Open Sans", sans-serif; text-align: center; letter-spacing: -.5px; }
.arrange { margin-left: 22px; }
.workspace { font-size: 12px; letter-spacing: -.5px; width: 97px; margin: 0 10px 0 12px; color: #d2d2d2; white-space: nowrap; }
.winbtns { display: flex; align-self: flex-start; width: 103px; height: 19px; margin: 0 3px 0 12px; border: 1px solid #1f1f1f; border-top: 0; border-radius: 0 0 4px 4px; background: #484848; }
.winbtns svg + svg { border-left: 1px solid #1f1f1f; }

/* control bar */
.control { height: 34px; flex: none; display: flex; align-items: center; border-top: 1px solid #5c5c5c; border-bottom: 1px solid #232323; padding: 0 17px 2px 5px; font-size: 11px; }
.grip-v { width: 3px; height: 20px; background: repeating-linear-gradient(#1a1a1a 0 1px, #555 1px 2px); }
.ctx { width: 80px; margin-left: 6px; white-space: nowrap; letter-spacing: -.6px; }
.control .vsep { height: 25px; }
.pair { display: flex; margin-left: 5px; width: 51px; height: 22px; border: 1px solid #262626; background: #5e5e5e; }
.pair svg { margin-top: -1px; }
.pair .on { background: #2f2f2f; margin-left: -1px; }
.swatch { display: flex; width: 35px; height: 20px; margin-left: 7px; border: 1px solid #262626; background: #5c5c5c; }
.swatch b { width: 18px; height: 18px; border: 2px solid #fff; background: #3c3c3c; font: 600 12px/14px "Open Sans", sans-serif; color: #ccc; text-align: center; }
.swatch + .swatch { margin-left: 6px; }
.dd { width: 15px; align-self: stretch; background: linear-gradient(#626262, #4e4e4e); border-left: 1px solid #262626; display: flex; align-items: center; justify-content: center; }
.dd::before { content: ""; border: 4px solid transparent; border-top: 5px solid #e0e0e0; border-bottom: 0; }
.link { color: #e58a2b; border-bottom: 1px dotted #e58a2b; line-height: 13px; white-space: nowrap; letter-spacing: -.3px; }
.l-contour { width: 42px; margin-left: 12px; }
.l-opac { width: 40px; margin-left: 7px; letter-spacing: -.4px; }
.field { display: flex; height: 20px; border: 1px solid #262626; background: #a3a3a3; color: #000; overflow: hidden; flex: none; }
.field .inp { flex: 1; padding-left: 4px; line-height: 18px; letter-spacing: -.4px; white-space: nowrap; }
.w-stroke { width: 79px; margin-left: 6px; }
.disabled { width: 108px; margin-left: 6px; background: #6e6e6e; }
.disabled .dd { background: #606060; }
.disabled .dd::before { border-top-color: #858585; }
.w-opac { width: 69px; margin-left: 5px; }
.step { width: 15px; border-right: 1px solid #262626; display: flex; flex-direction: column; justify-content: space-around; align-items: center; background: linear-gradient(#5c5c5c 0 8px, #262626 8px 9px, #555 9px); }
.step::before { content: ""; border: 3px solid transparent; border-bottom: 4px solid #e0e0e0; border-top: 0; }
.step::after { content: ""; border: 3px solid transparent; border-top: 4px solid #e0e0e0; border-bottom: 0; }
.s1 { margin-left: 5px; }
.globe { margin-left: 10px; }
.s2 { margin-left: 10px; }
.iso { margin-left: 11px; }
.aligns { display: grid; grid-template-columns: 26px 26px 31px 26px 26px 31px 26px 26px 31px 26px 26px 16px; margin-left: 16px; }
.aligns svg { width: 16px; height: 16px; }
.ln { stroke: #d6d6d6; stroke-width: 1.2; fill: none; }
.fl { fill: #b2b2b2; }
.ol { fill: #3a3a3a; stroke: #cfcfcf; }
.s3 { margin-left: 9px; }
.refpt { margin-left: 6px; }
.c-x { width: 10px; margin: 0 7px 0 9px; }
.c-y { width: 10px; margin: 0 6px 0 8px; }
.c-l { width: 9px; margin: 0 6px 0 7px; }
.c-h { width: 10px; margin: 0 6px 0 10px; }
.num { width: 74px; }
.num .inp { font-size: 10.5px; letter-spacing: -.75px; padding-left: 3px; }
.chain { margin-left: 9px; }

/* workspace */
.main { flex: 1; display: flex; min-height: 0; }
.tools { width: 42px; flex: none; border-left: 1px solid #232323; border-right: 3px solid #262626; }
.phead { height: 12px; background: #333; border-bottom: 1px solid #232323; padding: 3px 4px 0; }
.phead.r { display: flex; justify-content: flex-end; }
.grip-h { width: 19px; height: 3px; margin: 4px auto 0; background: repeating-linear-gradient(90deg, #151515 0 1px, #555 1px 2px); }
.toollist { margin: 9px 0 0 -1px; width: 40px; }
.t { width: 40px; height: 24px; }
.t.sub { background: linear-gradient(135deg, transparent 50%, #ddd 50%) 31px 20px / 3px 3px no-repeat; }
.t.sel { background: linear-gradient(#2f2f2f, #2f2f2f) 6px 1px / 28px 22px no-repeat; }
.hs { height: 2px; margin: 0 5px; background: #333; border-bottom: 1px solid #555; }
.hs.first { margin-bottom: -1px; }
.qm { fill: #b8d4ea; font-family: "Open Sans", sans-serif; font-weight: 600; }

.doc { flex: 1; display: flex; flex-direction: column; min-width: 0; }
.tabs { height: 20px; flex: none; background: linear-gradient(#373737, #2c2c2c); border-bottom: 1px solid #232323; }
.tab { width: 248px; height: 19px; background: #484848; border-right: 1px solid #232323; display: flex; align-items: center; padding-left: 9px; font-size: 11px; font-weight: 600; letter-spacing: 0; color: #ddd; }
.tab span { width: 216px; margin-right: 10px; white-space: nowrap; flex: none; }
.view { flex: 1; display: flex; min-height: 0; }
.canvas { width: 1821px; flex: none; background: #5d5d5d; overflow: hidden; }
.vscroll { width: 18px; background: #343434; border-left: 1px solid #262626; border-right: 1px solid #262626; display: flex; flex-direction: column; align-items: center; padding: 6px 0; }
.up { border: 5px solid transparent; border-bottom: 6px solid #e0e0e0; border-top: 0; }
.down { border: 5px solid transparent; border-top: 6px solid #e0e0e0; border-bottom: 0; margin-top: auto; }
.vthumb { width: 16px; height: 17px; background: #8b8b8b; margin-top: 443px; border: 1px solid #6b6b6b; }

.status { height: 16px; flex: none; display: flex; border-top: 1px solid #262626; border-bottom: 1px solid #1e1e1e; background: #484848; padding-left: 4px; font-size: 11px; align-items: stretch; }
.sfield { display: flex; width: 58px; border: 1px solid #262626; border-width: 0 1px; background: #a3a3a3; color: #000; }
.sfield span { flex: 1; padding-left: 3px; line-height: 16px; letter-spacing: -.4px; }
.nav1, .nav2 { align-self: center; }
.info { width: 200px; border-left: 1px solid #333; border-right: 1px solid #333; text-align: center; line-height: 15px; letter-spacing: -.5px; }
.more { width: 19px; display: flex; align-items: center; justify-content: center; border-right: 1px solid #262626; }
.hscroll { flex: 1; background: #343434; display: flex; align-items: center; padding: 0 23px 0 5px; }
.left { border: 5px solid transparent; border-right: 6px solid #e0e0e0; border-left: 0; }
.right { border: 5px solid transparent; border-left: 6px solid #e0e0e0; border-right: 0; margin-left: auto; }
.hthumb { width: 16px; height: 14px; margin-left: 680px; background: #8b8b8b; border: 1px solid #6b6b6b; }

.panels { width: 39px; flex: none; border-right: 1px solid #232323; margin-left: -1px; border-left: 1px solid #232323; }
.pgroup { border-bottom: 1px solid #232323; padding-bottom: 2px; }
.pgroup .grip-h { margin: 0 auto 3px; border-top: 4px solid #484848; height: 7px; }
.pgroup svg { width: 37px; height: 28px; }

/* map */
.map path { vector-effect: non-scaling-stroke; }
.sea { fill: #05dff9; }
.coast { fill: none; stroke: #111; stroke-width: 1.1; }
.river { fill: none; stroke: #1a3cf0; stroke-width: 1.2; }
.river.dk { stroke: #001c8c; stroke-width: 1.6; }
.coast.fat, .river.fat { stroke-width: 2.4; }
.road { fill: none; stroke: #d41c1c; stroke-width: 1.2; }
.pink { fill: none; stroke: #f02ad8; stroke-width: 1.2; }
.pink.purple { stroke: #a81ee6; }
.speck { fill: none; stroke: #000; stroke-width: 1.5; stroke-dasharray: 1.5 1.8 1 3; }
.speck.lt { stroke-width: 1; stroke-dasharray: 1 5 1.5 4; }
.lake { fill: #0c87df; stroke: #000; stroke-width: 1.2; }
.cata { fill: #1f78b4; stroke: #2a6288; stroke-width: .8; }
.proj { fill: #ff0; stroke: #a8a800; }
.ville { fill: #f00; stroke: #a00; stroke-width: .5; }
.legend text { font-family: "Open Sans", "Noto Sans", sans-serif; fill: #000; }

/* progress dialog */
.dialog { position: absolute; left: 777px; top: 435px; width: 365px; height: 157px; border: 1px solid #666; background: #484848; display: flex; flex-direction: column; box-shadow: 3px 3px 0 rgba(205, 205, 205, .75), 4px 4px 3px rgba(0, 0, 0, .7), 0 2px 16px rgba(0, 0, 0, .35); }
.dtitle { height: 31px; background: #fff; color: #111; font-size: 15px; line-height: 30px; padding-left: 3px; letter-spacing: -.55px; }
.dbody { flex: 1; padding: 39px 17px 0 15px; }
.bar { width: 296px; height: 16px; border: 1px solid #262626; background: #333; }
.fill { height: 14px; background: linear-gradient(#ea9133, #b87a26); }
.dmsg { font-size: 11px; line-height: 15px; margin: 4px 0 0 2px; color: #d8d8d8; letter-spacing: .03px; }
.drow { display: flex; justify-content: flex-end; margin-top: 17px; }
.stop { width: 78px; height: 17px; padding: 0; border: 1px solid #2a2a2a; background: linear-gradient(#5e5e5e, #505050); color: #ddd; font: 12px/14px "Open Sans", sans-serif; }
```
